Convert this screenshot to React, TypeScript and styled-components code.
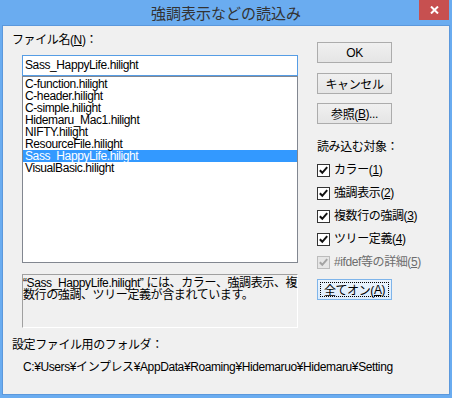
import styled, { createGlobalStyle } from 'styled-components';

const GlobalStyle = createGlobalStyle`
  html, body {
    margin: 0;
    padding: 0;
    background: #6aacf0;
  }
  body {
    font-family: "Liberation Sans", "Noto Sans CJK JP", sans-serif;
  }
`;

const files = [
  'C-function.hilight',
  'C-header.hilight',
  'C-simple.hilight',
  'Hidemaru_Mac1.hilight',
  'NIFTY.hilight',
  'ResourceFile.hilight',
  'Sass_HappyLife.hilight',
  'VisualBasic.hilight',
];

const targets = [
  { label: 'カラー', key: '1', disabled: false },
  { label: '強調表示', key: '2', disabled: false },
  { label: '複数行の強調', key: '3', disabled: false },
  { label: 'ツリー定義', key: '4', disabled: false },
  { label: '#ifdef等の詳細', key: '5', disabled: true },
];

function CheckBox({ disabled }: { disabled?: boolean }) {
  return (
    <Box $disabled={disabled}>
      <svg width="11" height="11" viewBox="0 0 11 11">
        <path
          d="M1.8 5.2 L4.3 7.8 L9.2 2.2"
          fill="none"
          stroke={disabled ? '#a3a3a3' : '#111'}
          strokeWidth="2"
        />
      </svg>
    </Box>
  );
}

function App() {
  return (
    <Window>
      <GlobalStyle />
      <TitleBar>
        強調表示などの読込み
        <CloseButton>
          <svg width="9" height="8" viewBox="0 0 9 8">
            <path d="M1 0.5 L8 7.5 M8 0.5 L1 7.5" stroke="#fff" strokeWidth="2" />
          </svg>
        </CloseButton>
      </TitleBar>
      <Client>
        <LeftColumn>
          <Label>
            ファイル名(<u>N</u>)：
          </Label>
          <NameInput>Sass_HappyLife.hilight</NameInput>
          <FileList>
            {files.map((f) => (
              <FileRow key={f} $selected={f === 'Sass_HappyLife.hilight'}>
                {f}
              </FileRow>
            ))}
          </FileList>
          <Description>
            <span>“Sass_HappyLife.hilight” には、カラー、強調表示、複</span>
            <span>数行の強調、ツリー定義が含まれています。</span>
          </Description>
          <FolderLabel>設定ファイル用のフォルダ：</FolderLabel>
          <FolderPath>
            C:¥Users¥インプレス¥AppData¥Roaming¥Hidemaruo¥Hidemaru¥Setting
          </FolderPath>
        </LeftColumn>
        <RightColumn>
          <Button $top={16}>OK</Button>
          <Button $top={10}>キャンセル</Button>
          <Button $top={9}>
            参照(<u>B</u>)...
          </Button>
          <TargetLabel>読み込む対象：</TargetLabel>
          <Targets>
            {targets.map((t) => (
              <CheckRow key={t.key} $disabled={t.disabled}>
                <CheckBox disabled={t.disabled} />
                <span>
                  {t.label}(<u>{t.key}</u>)
                </span>
              </CheckRow>
            ))}
          </Targets>
          <Button $top={10} $focused>
            全てオン(<u>A</u>)
          </Button>
        </RightColumn>
      </Client>
    </Window>
  );
}

export default App;

const Window = styled.div`
  width: 452px;
  height: 398px;
  box-sizing: border-box;
  padding: 0 2px 3px 2px;
  display: flex;
  flex-direction: column;
  background: #6aacf0;
  font-size: 12px;
  letter-spacing: -0.4px;
  color: #000;
`;

const TitleBar = styled.div`
  position: relative;
  height: 25px;
  line-height: 25px;
  text-align: center;
  font-family: "Noto Sans CJK JP", sans-serif;
  font-size: 15px;
  letter-spacing: 0;
  color: #333;
`;

const CloseButton = styled.div`
  position: absolute;
  top: 0;
  right: 1px;
  width: 30px;
  height: 20px;
  background: #c75050;
  display: flex;
  align-items: center;
  justify-content: center;
`;

const Client = styled.div`
  flex: 1;
  display: flex;
  background: #f0f0f0;
  border: 1px solid #5b98dc;
`;

const LeftColumn = styled.div`
  width: 290px;
  padding-left: 9px;
  display: flex;
  flex-direction: column;
`;

const Label = styled.div`
  margin-top: 8px;
  line-height: 13px;
  height: 13px;
`;

const NameInput = styled.div`
  margin: 8px 0 0 10px;
  width: 276px;
  height: 21px;
  box-sizing: border-box;
  border: 1px solid #569de5;
  background: #fff;
  padding: 0 2px;
  line-height: 19px;
`;

const FileList = styled.div`
  margin-left: 10px;
  width: 276px;
  height: 187px;
  box-sizing: border-box;
  border: 1px solid #828790;
  background: #fff;
  padding-top: 1px;
`;

const FileRow = styled.div<{ $selected?: boolean }>`
  height: 12px;
  line-height: 12px;
  padding-left: 2px;
  white-space: nowrap;
  background: ${(p) => (p.$selected ? '#3399ff' : 'transparent')};
  color: ${(p) => (p.$selected ? '#fff' : '#000')};
`;

const Description = styled.div`
  margin: 11px 0 0 10px;
  width: 276px;
  height: 54px;
  box-sizing: border-box;
  border-style: solid;
  border-width: 1px;
  border-color: #a0a0a0 #fff #fff #a0a0a0;
  padding-top: 2px;
  line-height: 12px;
  display: flex;
  flex-direction: column;
  white-space: nowrap;
`;

const FolderLabel = styled.div`
  margin-top: 11px;
  line-height: 13px;
`;

const FolderPath = styled.div`
  margin: 9px 0 0 11px;
  line-height: 13px;
  white-space: nowrap;
`;

const RightColumn = styled.div`
  margin-left: 15px;
  width: 90px;
  display: flex;
  flex-direction: column;
`;

const Button = styled.div<{ $top: number; $focused?: boolean }>`
  margin-top: ${(p) => p.$top}px;
  width: 75px;
  height: 21px;
  box-sizing: border-box;
  display: flex;
  align-items: center;
  justify-content: center;
  border: 1px solid ${(p) => (p.$focused ? '#7eb4ea' : '#acacac')};
  background: ${(p) =>
    p.$focused
      ? 'linear-gradient(#ecf4fc, #dcecfc)'
      : 'linear-gradient(#f0f0f0, #e5e5e5)'};
  outline: ${(p) => (p.$focused ? '1px dotted #000' : 'none')};
  outline-offset: -4px;
`;

const TargetLabel = styled.div`
  margin-top: 17px;
  line-height: 13px;
`;

const Targets = styled.div`
  margin-top: 10px;
  display: flex;
  flex-direction: column;
  gap: 10px;
`;

const CheckRow = styled.div<{ $disabled?: boolean }>`
  display: flex;
  align-items: center;
  gap: 4px;
  height: 13px;
  line-height: 13px;
  white-space: nowrap;
  color: ${(p) => (p.$disabled ? '#6d6d6d' : '#000')};
`;

const Box = styled.div<{ $disabled?: boolean }>`
  width: 13px;
  height: 13px;
  box-sizing: border-box;
  border: 1px solid ${(p) => (p.$disabled ? '#bcbcbc' : '#333')};
  background: ${(p) => (p.$disabled ? '#e6e6e6' : '#fff')};
  display: flex;
  align-items: center;
  justify-content: center;
`;
